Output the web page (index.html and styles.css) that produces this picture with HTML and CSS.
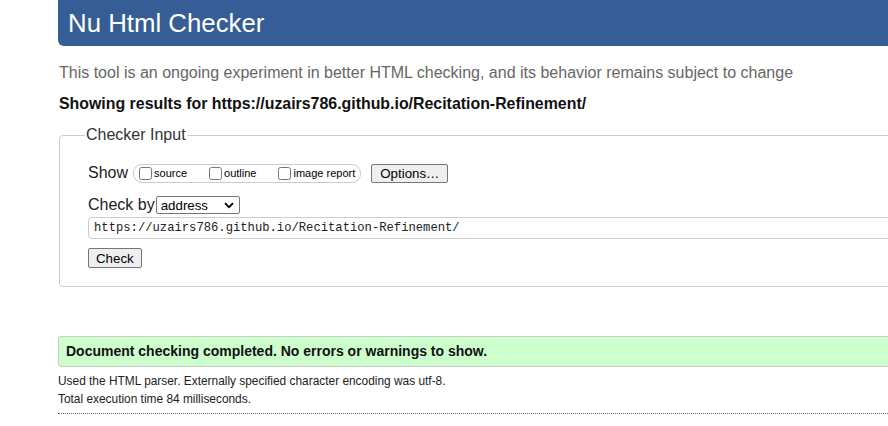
FILE: index.html
```html
<!DOCTYPE html>
<html lang="en">
<head>
<meta charset="utf-8">
<title>Nu Html Checker</title>
<link rel="stylesheet" href="styles.css">
</head>
<body>
<div class="page">
  <h1 class="title">Nu Html Checker</h1>
  <p class="lead">This tool is an ongoing experiment in better HTML checking, and its behavior remains subject to change</p>
  <p class="showing">Showing results for https://uzairs786.github.io/Recitation-Refinement/</p>
  <fieldset class="checker">
    <legend class="legend">Checker Input</legend>
    <div class="row show-row">
      <span class="label">Show</span>
      <span class="group">
        <label class="opt"><input type="checkbox" class="cb">source</label>
        <label class="opt"><input type="checkbox" class="cb">outline</label>
        <label class="opt last"><input type="checkbox" class="cb">image report</label>
      </span>
      <button class="btn options">Options…</button>
    </div>
    <div class="row checkby-row">
      <span class="label">Check by</span>
      <span class="select">address<svg class="chev" width="10" height="7" viewBox="0 0 10 7"><path d="M1 1.2 L5 5.2 L9 1.2" fill="none" stroke="#000" stroke-width="1.8"/></svg></span>
    </div>
    <div class="url">https://uzairs786.github.io/Recitation-Refinement/</div>
    <button class="btn check">Check</button>
  </fieldset>
  <div class="success">Document checking completed. No errors or warnings to show.</div>
  <p class="details first">Used the HTML parser. Externally specified character encoding was utf-8.</p>
  <p class="details">Total execution time 84 milliseconds.</p>
  <hr class="dotted">
</div>
</body>
</html>
```
FILE: styles.css
```css
html, body {
  margin: 0;
  padding: 0;
  background: #fff;
  overflow: hidden;
}
body {
  font-family: "Liberation Sans", Arial, sans-serif;
  color: #000;
}
.page {
  margin-left: 58px;
  width: 1100px;
}
.title {
  margin: 0;
  height: 46px;
  box-sizing: border-box;
  background: #365d95;
  color: #fff;
  font-weight: normal;
  font-size: 25.8px;
  line-height: 46px;
  padding-left: 10px;
  border-radius: 0 0 0 6px;
}
.lead {
  margin: 17px 0 0 1px;
  font-size: 16px;
  line-height: 20px;
  color: #666;
}
.showing {
  margin: 11px 0 0 1px;
  font-size: 15.9px;
  line-height: 20px;
  font-weight: bold;
  color: #111;
}
.checker {
  margin: 12px 0 0 1px;
  border: 1px solid #ccc;
  border-radius: 4px;
  padding: 18px 0 18px 28px;
}
.legend {
  margin-left: -3px;
  padding: 0 1px;
  font-size: 16px;
  color: #333;
}
.row {
  display: flex;
  align-items: center;
}
.label {
  font-size: 16px;
  color: #222;
}
.show-row {
  height: 22px;
}
.group {
  display: inline-flex;
  align-items: center;
  margin-left: 5px;
  border: 1px solid #ccc;
  border-radius: 9px;
  height: 17px;
  padding: 0 5px 0 5px;
}
.opt {
  display: inline-flex;
  align-items: center;
  font-size: 11px;
  margin-right: 22px;
}
.opt.last {
  margin-right: 0;
}
.cb {
  width: 13px;
  height: 13px;
  margin: 0 2px 0 0;
}
.btn {
  font-family: "Liberation Sans", Arial, sans-serif;
  font-size: 13.3px;
  background: #efefef;
  border: 1px solid #767676;
  border-radius: 2px;
  color: #000;
  padding: 0 6px;
  height: 20px;
}
.options {
  margin-left: 10px;
  height: 19px;
  padding: 0 8px;
}
.checkby-row {
  margin-top: 12px;
}
.select {
  display: inline-flex;
  align-items: center;
  justify-content: space-between;
  width: 84px;
  height: 18px;
  box-sizing: border-box;
  border: 1px solid #767676;
  border-radius: 2px;
  margin-left: 1px;
  padding: 0 5px 0 4px;
  font-size: 13.3px;
}
.url {
  margin-top: 3px;
  height: 22px;
  box-sizing: border-box;
  border: 1px solid #ccc;
  border-radius: 4px;
  padding-left: 5px;
  font-family: "Liberation Mono", "DejaVu Sans Mono", monospace;
  font-size: 12.2px;
  line-height: 20px;
  color: #222;
}
.check {
  margin-top: 9px;
  height: 20px;
  padding: 0 7px;
}
.success {
  margin-top: 49px;
  height: 31px;
  box-sizing: border-box;
  background: #ccffcc;
  border: 1px solid #ccc;
  border-radius: 3px 0 0 3px;
  padding-left: 7px;
  font-weight: bold;
  font-size: 14px;
  line-height: 29px;
  color: #111;
}
.details {
  margin: 0;
  font-size: 11.9px;
  line-height: 18px;
  color: #222;
}
.details.first {
  margin-top: 5px;
}
.dotted {
  margin: 5px 0 0 0;
  border: 0;
  border-top: 1px dotted #666;
  height: 0;
}
```
